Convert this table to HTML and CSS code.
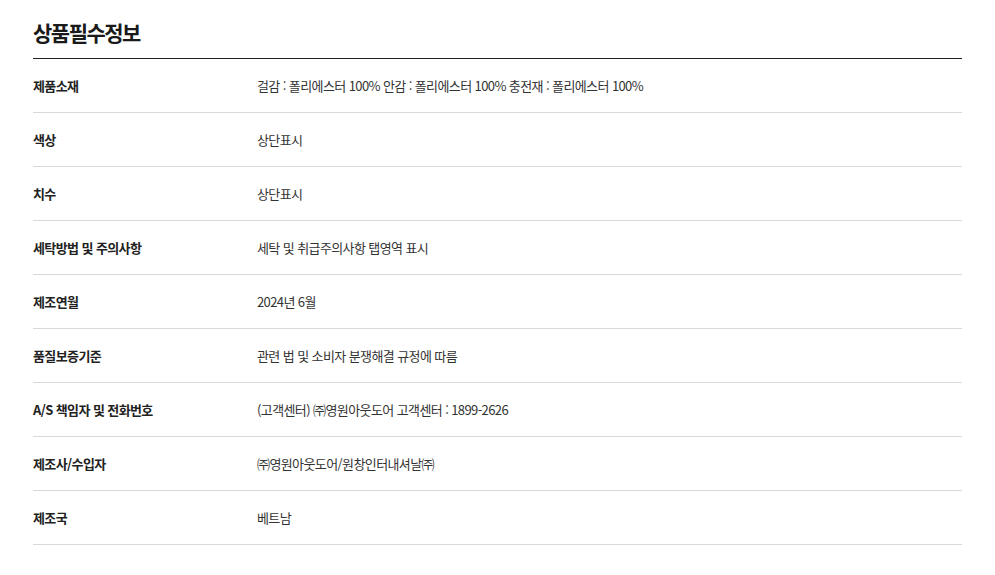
FILE: index.html
```html
<!DOCTYPE html>
<html lang="ko">
<head>
<meta charset="utf-8">
<link rel="stylesheet" href="styles.css">
</head>
<body>
<section class="info">
  <h2 class="info-title">상품필수정보</h2>
  <dl class="info-table">
    <div class="row"><dt>제품소재</dt><dd>걸감 : 폴리에스터 100% 안감 : 폴리에스터 100% 충전재 : 폴리에스터 100%</dd></div>
    <div class="row"><dt>색상</dt><dd>상단표시</dd></div>
    <div class="row"><dt>치수</dt><dd>상단표시</dd></div>
    <div class="row"><dt>세탁방법 및 주의사항</dt><dd>세탁 및 취급주의사항 탭영역 표시</dd></div>
    <div class="row"><dt>제조연월</dt><dd>2024년 6월</dd></div>
    <div class="row"><dt>품질보증기준</dt><dd>관련 법 및 소비자 분쟁해결 규정에 따름</dd></div>
    <div class="row"><dt>A/S 책임자 및 전화번호</dt><dd>(고객센터) ㈜영원아웃도어 고객센터 : 1899-2626</dd></div>
    <div class="row"><dt>제조사/수입자</dt><dd>㈜영원아웃도어/원창인터내셔날㈜</dd></div>
    <div class="row"><dt>제조국</dt><dd>베트남</dd></div>
  </dl>
</section>
</body>
</html>
```
FILE: styles.css
```css
* { box-sizing: border-box; }
body {
  margin: 0;
  background: #fff;
  font-family: "Noto Sans CJK KR", "Noto Sans", sans-serif;
  color: #222;
}
.info {
  width: 929px;
  margin-left: 33px;
  padding-top: 17px;
}
.info-title {
  margin: 0;
  font-size: 21px;
  font-weight: 700;
  letter-spacing: -1.5px;
  line-height: 30px;
  padding-bottom: 11px;
  border-bottom: 1px solid #222;
  color: #1a1a1a;
}
.info-table {
  margin: 0;
}
.row {
  display: grid;
  grid-template-columns: 224px 1fr;
  align-items: center;
  height: 54px;
  border-bottom: 1px solid #d9d9d9;
}
.row dt {
  font-size: 13px;
  font-weight: 700;
  letter-spacing: -0.6px;
  color: #222;
}
.row dd {
  margin: 0;
  font-size: 13px;
  letter-spacing: -0.6px;
  color: #333;
}
```
